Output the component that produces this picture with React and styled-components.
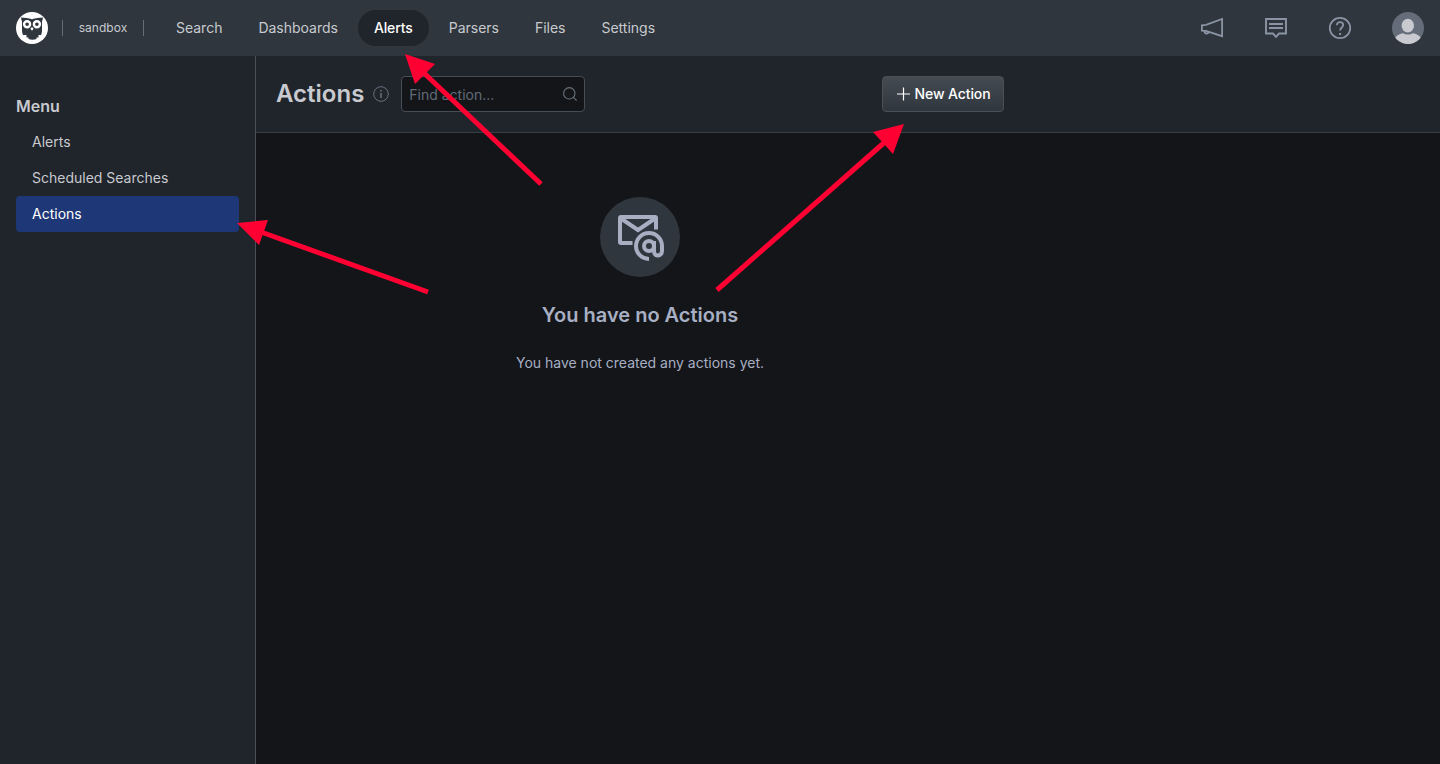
import React from 'react';
import styled, { createGlobalStyle } from 'styled-components';

const GlobalStyle = createGlobalStyle`
  * { box-sizing: border-box; }
  body {
    margin: 0;
    background: #131519;
    color: #c8cacf;
    font-family: Inter, "Liberation Sans", sans-serif;
    font-size: 14px;
    line-height: 20px;
    overflow: hidden;
  }
`;

const Page = styled.div`
  position: relative;
  display: flex;
  flex-direction: column;
  height: 100vh;
`;

const TopBar = styled.header`
  display: flex;
  align-items: center;
  height: 56px;
  flex: none;
  padding: 0 16px;
  background: #2f363d;
`;

const Repository = styled.div`
  display: flex;
  align-items: center;
  justify-content: center;
  width: 82px;
  height: 16px;
  margin-left: 14px;
  border: solid #656d78;
  border-width: 0 1px;
  font-size: 12px;
  letter-spacing: 0.05px;
`;

const Nav = styled.nav`
  display: flex;
  gap: 4px;
  margin-left: 16px;
`;

const NavItem = styled.a`
  display: flex;
  align-items: center;
  height: 36px;
  padding: 0 16px;
  border-radius: 18px;
  background: ${(p) => (p.$active ? '#20242b' : 'transparent')};
  color: ${(p) => (p.$active ? '#ffffff' : '#c8cacf')};
  font-weight: ${(p) => (p.$active ? 500 : 400)};
  letter-spacing: ${(p) => (p.$active ? '-0.12px' : '-0.01px')};
`;

const Tools = styled.div`
  display: flex;
  align-items: center;
  gap: 40px;
  margin-left: auto;
  color: #8a94a4;
`;

const Avatar = styled.svg`
  display: block;
  width: 32px;
  height: 32px;
`;

const Icon = styled.svg`
  display: block;
  flex: none;
  width: ${(p) => p.$size}px;
  height: ${(p) => p.$size}px;
  fill: none;
  stroke: currentColor;
`;

const Body = styled.div`
  display: flex;
  flex: 1;
`;

const Sidebar = styled.aside`
  width: 256px;
  flex: none;
  padding: 38px 16px 0;
  background: #20242b;
  border-right: 1px solid #4a4f57;
`;

const MenuTitle = styled.h2`
  margin: 0 0 6px;
  font-size: 16px;
  font-weight: 600;
  line-height: 24px;
`;

const MenuItem = styled.a`
  display: flex;
  align-items: center;
  height: 36px;
  padding: 0 16px;
  border-radius: 4px;
  background: ${(p) => (p.$active ? '#1e3777' : 'transparent')};
  color: ${(p) => (p.$active ? '#ffffff' : '#c8cacf')};
`;

const Main = styled.main`
  flex: 1;
`;

const PageHeader = styled.div`
  height: 77px;
  padding: 20px;
  background: #20242b;
  border-bottom: 1px solid #373d45;
`;

const HeaderContent = styled.div`
  display: flex;
  align-items: center;
  width: 728px;
  color: #69717d;
`;

const Title = styled.h1`
  margin: 0 9px 0 0;
  color: #c8cacf;
  font-size: 24px;
  font-weight: 600;
  line-height: 32px;
`;

const SearchField = styled.label`
  display: flex;
  align-items: center;
  width: 184px;
  height: 36px;
  margin-left: 12px;
  padding: 0 6px 0 7px;
  background: #131519;
  border: 1px solid #474d56;
  border-radius: 4px;
`;

const SearchInput = styled.input`
  flex: 1;
  min-width: 0;
  height: 34px;
  padding: 1px 0 0;
  border: 0;
  outline: 0;
  background: transparent;
  color: #c8cacf;
  font: inherit;
  &::placeholder { color: #626b78; opacity: 1; }
`;

const NewButton = styled.button`
  display: flex;
  align-items: center;
  justify-content: center;
  gap: 5px;
  width: 122px;
  height: 36px;
  margin-left: auto;
  padding: 0;
  background: linear-gradient(#454b52, #2f363d);
  border: 1px solid #4a5058;
  border-radius: 4px;
  color: #ffffff;
  font: inherit;
  font-weight: 500;
  letter-spacing: -0.1px;
`;

const EmptyState = styled.section`
  display: flex;
  flex-direction: column;
  align-items: center;
  width: 768px;
  padding-top: 64px;
  color: #a8afc3;
`;

const EmptyBadge = styled.div`
  display: flex;
  align-items: center;
  justify-content: center;
  width: 80px;
  height: 80px;
  border-radius: 50%;
  background: #2f363d;
`;

const EmptyTitle = styled.h3`
  margin: 24px 0 0;
  font-size: 20px;
  font-weight: 600;
  line-height: 28px;
`;

const EmptyText = styled.p`
  margin: 24px 0 0;
`;

const Annotations = styled.svg`
  position: absolute;
  top: 0;
  left: 0;
  pointer-events: none;
`;

function OwlLogo() {
  return (
    <Avatar viewBox="0 0 32 32">
      <circle cx="16" cy="16" r="16" fill="#fff" />
      <path
        d="M5 5.500c3.500.7 7.500.2 11 1.800 3.500-1.600 7.500-1.100 11-1.800-.2 2-1 3.300-1 5v8c0 1.700-.3 3-1 4.500h-2.500v2.500h-2v1.500c-2.200.9-5.800.9-8 0v-1.500h-2V23H7c-.7-1.500-1-2.800-1-4.500v-8c0-1.700-.8-3-1-5z"
        fill="#2f363d"
      />
      <circle cx="11.100" cy="12.300" r="3" fill="#2f363d" stroke="#fff" strokeWidth="2.400" />
      <circle cx="20.900" cy="12.300" r="3" fill="#2f363d" stroke="#fff" strokeWidth="2.400" />
      <path d="M16 14.900l1.600 1.800-1.600 2-1.600-2z" fill="#fff" />
    </Avatar>
  );
}

function UserAvatar() {
  return (
    <Avatar viewBox="0 0 32 32">
      <defs>
        <clipPath id="avatar-clip"><circle cx="16" cy="16" r="16" /></clipPath>
      </defs>
      <g clipPath="url(#avatar-clip)">
        <rect width="32" height="32" fill="#646d79" />
        <ellipse cx="15.800" cy="13.700" rx="6.200" ry="6.900" fill="#c8cacf" />
        <path d="M3 26c2-3 5-4.300 8-4.800 3 1.800 7 1.800 10 0 3 .5 6 1.800 8 4.800v7H3z" fill="#c8cacf" />
      </g>
    </Avatar>
  );
}

function MegaphoneIcon() {
  return (
    <Icon $size={24} viewBox="0 0 24 24" strokeWidth="1.800">
      <path d="M1.900 14.600V9.300L6 8.800 22.100 3v17.200L6 14.900z" />
      <path d="M4.600 15c-.2 1.500.7 2.500 2 2.500s2.100-.8 2.300-1.900" />
    </Icon>
  );
}

function MessageIcon() {
  return (
    <Icon $size={24} viewBox="0 0 24 24" strokeWidth="1.900">
      <path d="M2 3h20v14.500h-7l-3 3.300-3-3.300H2z" />
      <path d="M5 8h14M5 12h14" />
    </Icon>
  );
}

function HelpIcon() {
  return (
    <Icon $size={24} viewBox="0 0 24 24" strokeWidth="1.800">
      <circle cx="12" cy="12" r="10.200" />
      <path d="M8.900 9.200c0-2 1.300-3.100 3.200-3.100s3.100 1.200 3.100 2.900c0 2.500-3.100 2.600-3.100 5.600" />
      <path d="M11.100 18h2" strokeWidth="2" />
    </Icon>
  );
}

function InfoIcon() {
  return (
    <Icon $size={16} viewBox="0 0 16 16">
      <circle cx="8" cy="8" r="7.300" />
      <path d="M8 7v5" strokeWidth="1.500" />
      <path d="M8 4v1.600" strokeWidth="1.600" />
    </Icon>
  );
}

function SearchIcon() {
  return (
    <Icon $size={16} viewBox="0 0 16 16" strokeWidth="1.100">
      <circle cx="7.300" cy="7.300" r="5.700" />
      <path d="M11.400 11.400l3.300 3.300" />
    </Icon>
  );
}

function PlusIcon() {
  return (
    <Icon $size={14} viewBox="0 0 14 14" strokeWidth="1.200">
      <path d="M7.500 0.500v13M1 7h13" />
    </Icon>
  );
}

function MailAtIcon() {
  return (
    <Icon $size={48} viewBox="0 0 48 48" strokeWidth="4">
      <path d="M16.500 30H5a1 1 0 0 1-1-1V5a1 1 0 0 1 1-1h34a1 1 0 0 1 1 1v11.500" />
      <path d="M5 5.500l17 11.500 17-11.500" />
      <circle cx="33" cy="33" r="5" />
      <path d="M38 28v10c0 6.500 8 5.500 8 0v-5a13 13 0 1 0-13 13" />
    </Icon>
  );
}

const arrows = [
  { line: [541, 184, 424, 73], head: '405,54 435,64 415,84' },
  { line: [428, 292, 261, 232], head: '237,223 268,220 259,245' },
  { line: [717, 290, 886, 141], head: '904,124 893,154 873,132' },
];

const navItems = ['Search', 'Dashboards', 'Alerts', 'Parsers', 'Files', 'Settings'];
const menuItems = ['Alerts', 'Scheduled Searches', 'Actions'];

export default function App() {
  return (
    <Page>
      <GlobalStyle />
      <TopBar>
        <OwlLogo />
        <Repository>sandbox</Repository>
        <Nav>
          {navItems.map((item) => (
            <NavItem key={item} $active={item === 'Alerts'}>{item}</NavItem>
          ))}
        </Nav>
        <Tools>
          <MegaphoneIcon />
          <MessageIcon />
          <HelpIcon />
          <UserAvatar />
        </Tools>
      </TopBar>
      <Body>
        <Sidebar>
          <MenuTitle>Menu</MenuTitle>
          {menuItems.map((item) => (
            <MenuItem key={item} $active={item === 'Actions'}>{item}</MenuItem>
          ))}
        </Sidebar>
        <Main>
          <PageHeader>
            <HeaderContent>
              <Title>Actions</Title>
              <InfoIcon />
              <SearchField>
                <SearchInput placeholder="Find action..." />
                <SearchIcon />
              </SearchField>
              <NewButton><PlusIcon />New Action</NewButton>
            </HeaderContent>
          </PageHeader>
          <EmptyState>
            <EmptyBadge><MailAtIcon /></EmptyBadge>
            <EmptyTitle>You have no Actions</EmptyTitle>
            <EmptyText>You have not created any actions yet.</EmptyText>
          </EmptyState>
        </Main>
      </Body>
      <Annotations width="1440" height="764" viewBox="0 0 1440 764">
        {arrows.map(({ line: [x1, y1, x2, y2], head }) => (
          <g key={head} fill="#ff0033" stroke="#ff0033">
            <line x1={x1} y1={y1} x2={x2} y2={y2} strokeWidth="5" />
            <polygon points={head} stroke="none" />
          </g>
        ))}
      </Annotations>
    </Page>
  );
}
